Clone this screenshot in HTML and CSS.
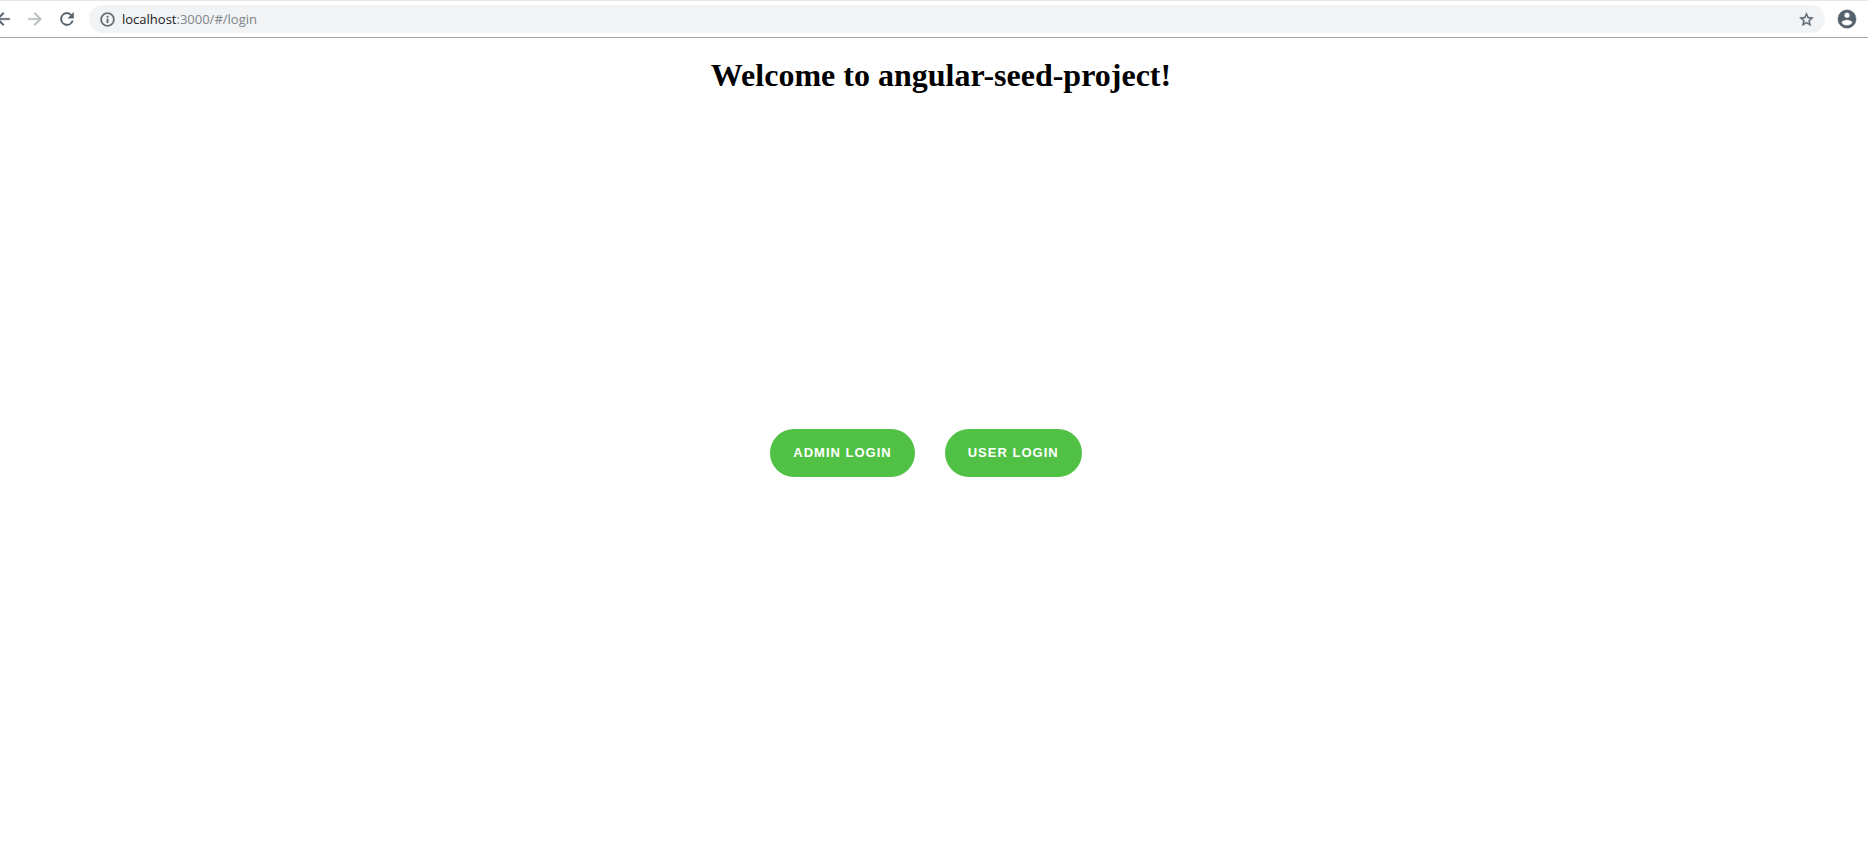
FILE: index.html
```html
<!DOCTYPE html>
<html lang="en">
<head>
<meta charset="utf-8">
<title>angular-seed-project</title>
<link rel="stylesheet" href="styles.css">
</head>
<body>
<header class="toolbar">
  <nav class="nav" aria-label="Browser navigation">
    <button class="icon-btn" aria-label="Back"><svg viewBox="0 0 24 24"><path d="M20 11H7.83l5.59-5.59L12 4l-8 8 8 8 1.41-1.41L7.83 13H20z"/></svg></button>
    <button class="icon-btn icon-btn--off" aria-label="Forward"><svg viewBox="0 0 24 24"><path d="M12 4l-1.41 1.41L16.17 11H4v2h12.17l-5.58 5.59L12 20l8-8z"/></svg></button>
    <button class="icon-btn" aria-label="Reload"><svg viewBox="0 0 24 24"><path d="M17.65 6.35A8 8 0 1 0 19.73 14h-2.08A6 6 0 1 1 12 6c1.66 0 3.14.69 4.22 1.78L13 11h7V4z"/></svg></button>
  </nav>
  <div class="address">
    <svg class="info" viewBox="0 0 24 24" aria-hidden="true"><path d="M11 7h2v2h-2zm0 4h2v6h-2zm1-9a10 10 0 1 0 0 20 10 10 0 0 0 0-20zm0 18a8 8 0 1 1 0-16 8 8 0 0 1 0 16z"/></svg>
    <a class="url" href="#/login"><span class="host">localhost</span>:3000/#/login</a>
    <button class="icon-btn star" aria-label="Bookmark this page"><svg viewBox="0 0 24 24"><path d="M22 9.24l-7.19-.62L12 2 9.19 8.63 2 9.24l5.46 4.73L5.82 21 12 17.27 18.18 21l-1.63-7.03zM12 15.4l-3.76 2.27 1-4.28-3.32-2.88 4.38-.38L12 6.1l1.71 4.04 4.38.38-3.32 2.88 1 4.28z"/></svg></button>
  </div>
  <button class="icon-btn profile" aria-label="Profile"><svg viewBox="0 0 24 24"><path d="M12 2a10 10 0 1 0 0 20 10 10 0 0 0 0-20zm0 3a3 3 0 1 1 0 6 3 3 0 0 1 0-6zm0 14.2a7.2 7.2 0 0 1-6-3.22c.03-1.99 4-3.08 6-3.08s5.97 1.09 6 3.08a7.2 7.2 0 0 1-6 3.22z"/></svg></button>
</header>
<main class="page">
  <h1 class="title">Welcome to angular-seed-project!</h1>
  <div class="actions">
    <button class="login">ADMIN LOGIN</button>
    <button class="login">USER LOGIN</button>
  </div>
</main>
</body>
</html>
```
FILE: styles.css
```css
* { box-sizing: border-box; }
body {
  margin: 0;
  min-height: 100vh;
  display: flex;
  flex-direction: column;
  background: #fff;
  overflow-x: hidden;
}
.toolbar {
  height: 38px;
  display: flex;
  align-items: center;
  border-top: 1px solid #e4e7ea;
  border-bottom: 1px solid #a9a9a9;
}
.nav {
  display: flex;
  gap: 12px;
  margin-left: -7px;
  margin-right: 12px;
}
.icon-btn {
  display: block;
  padding: 0;
  border: 0;
  background: none;
  width: 20px;
  height: 20px;
  color: #55626d;
}
.icon-btn svg, .info {
  display: block;
  width: 100%;
  height: 100%;
  fill: currentColor;
  stroke: currentColor;
  stroke-width: 0.4;
}
.icon-btn--off { color: #b9bebc; }
.address {
  flex: 1;
  display: flex;
  align-items: center;
  height: 28px;
  padding: 0 10px;
  border-radius: 14px;
  background: #f1f3f4;
}
.address .info { width: 17px; height: 17px; color: #5f6368; }
.url {
  flex: 1;
  margin-left: 6px;
  font: 13px/20px "Open Sans", "Noto Sans", sans-serif;
  color: #80868b;
  text-decoration: none;
}
.host { color: #202124; }
.star { width: 17px; height: 17px; }
.profile { width: 22px; height: 22px; margin: 0 10px 0 11px; }
.page {
  flex: 1;
  padding-left: 14px;
}
.title {
  margin: 19px 0 0;
  font: bold 32px/36px "Liberation Serif", "Times New Roman", serif;
  text-align: center;
}
.actions {
  display: flex;
  justify-content: center;
  margin-top: 336px;
}
.login {
  height: 48px;
  margin-right: 30px;
  padding: 0 23px;
  border: 0;
  border-radius: 24px;
  background: #50c144;
  color: #fff;
  font: bold 13px/18px "Liberation Sans", Arial, sans-serif;
  letter-spacing: 1px;
}
```
